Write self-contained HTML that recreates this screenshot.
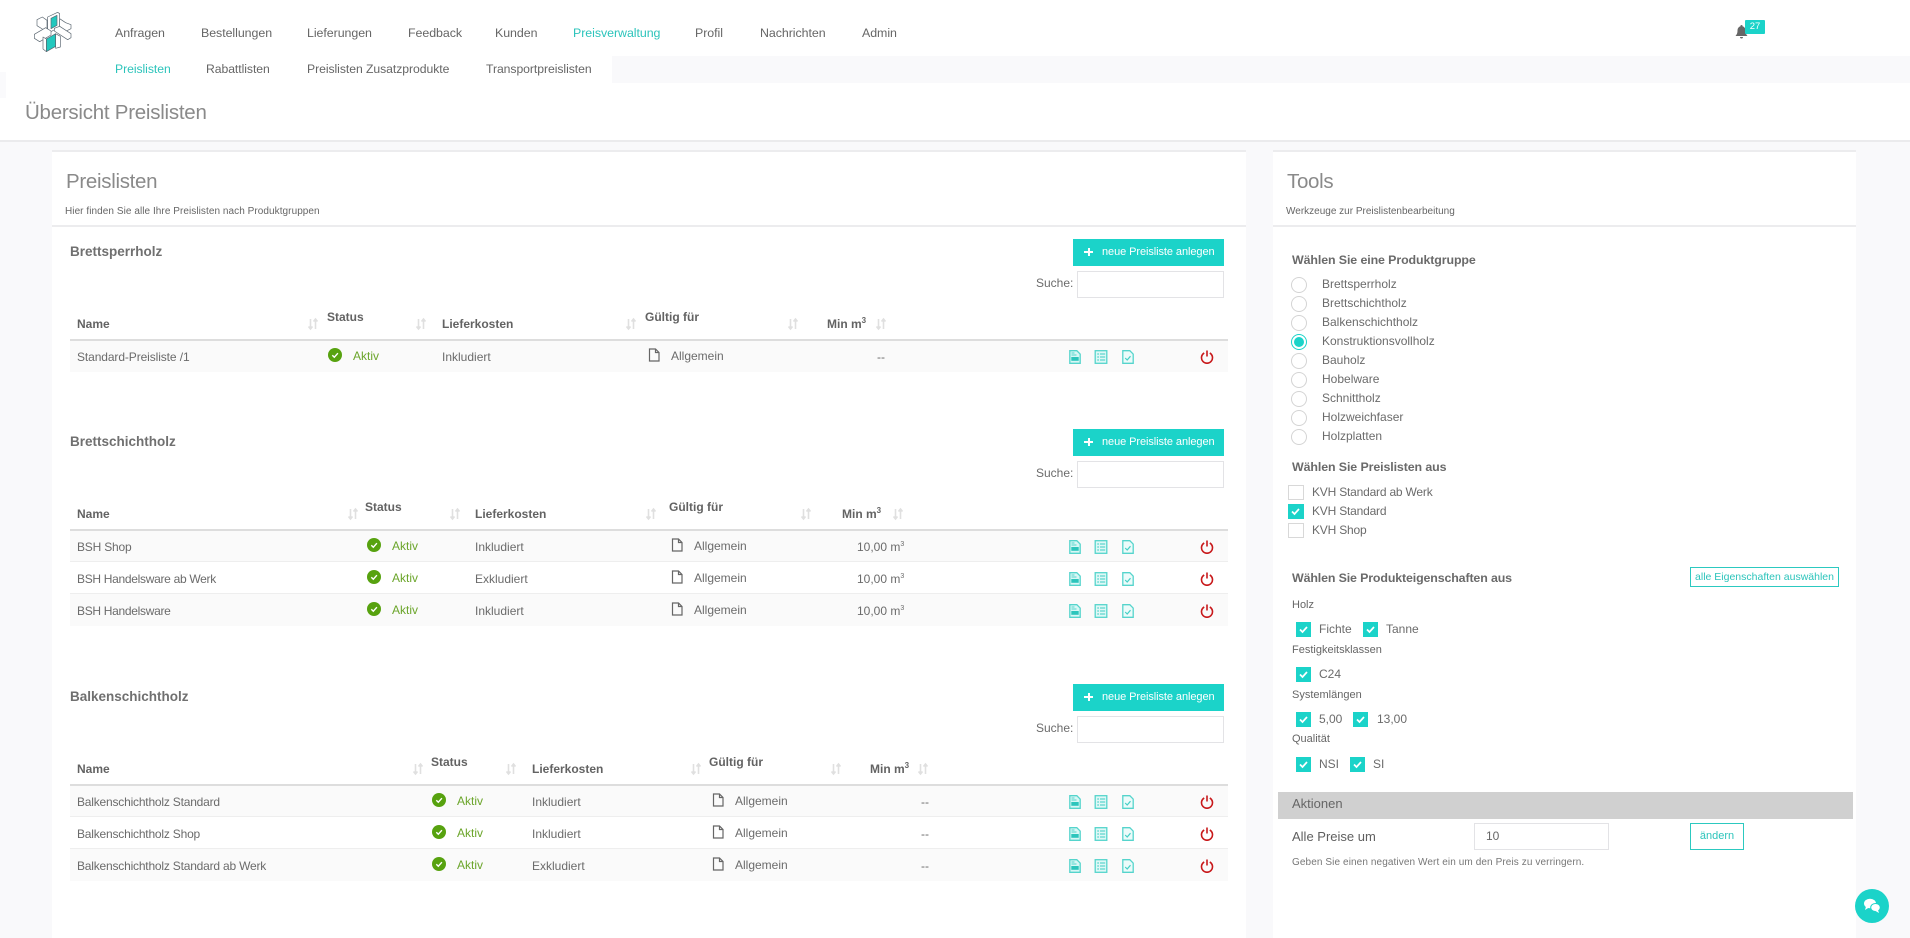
<!DOCTYPE html>
<html lang="de">
<head>
<meta charset="utf-8">
<title>Übersicht Preislisten</title>
<style>
html,body{margin:0;padding:0;width:1910px;height:938px;overflow:hidden;background:#f9f9fb}
body{font-family:"Liberation Sans",sans-serif;color:#666;font-size:12px;position:relative}
.t{position:absolute;white-space:nowrap;line-height:16px}
.b{position:absolute}
.n{font-size:12.4px;color:#666;letter-spacing:-.05px}
.s{font-size:12.2px;letter-spacing:-.05px}
.h{font-weight:bold;color:#636363;font-size:12px}
.sec{font-weight:bold;color:#707070;font-size:13.500px}
.sh{font-weight:bold;color:#6a6a6a;font-size:12.400px;letter-spacing:-.1px}
.w{position:absolute;left:0;height:0;width:1910px}
.btn{position:absolute;left:1073px;top:239px;width:151px;height:27px;background:#1bd3c9;color:#fff;font-size:11px;line-height:27px;white-space:nowrap}
.btn i{position:absolute;background:#fff}
.btn i.x{left:11px;top:12px;width:9px;height:2px}
.btn i.y{left:15px;top:9px;width:2px;height:8px}
.btn span{position:absolute;left:29px;letter-spacing:-.08px}
.in{position:absolute;background:#fff;border:1px solid #e3e3e6;box-sizing:border-box}
.r{position:absolute;left:70px;width:1158px;height:32px;box-sizing:border-box;border-bottom:1px solid #eee}
.gr{background:#fafafa}
.ic{position:absolute;width:14px;height:14px}
.ra{position:absolute;left:1291px;width:16px;height:16px;border:1px solid #d4d4d4;border-radius:50%;box-sizing:border-box;background:#fff}
.cb{position:absolute;width:15px;height:15px;background:#1bd3c9}
.cb svg{position:absolute;left:2px;top:2px}
.ub{position:absolute;left:1288px;width:16px;height:15px;border:1px solid #d8d8d8;box-sizing:border-box;background:#fff}
.l{font-size:12px;color:#6b6b6b}
.k{letter-spacing:-.2px}
.g{color:#6ba52a}
.big{font-size:20.500px;line-height:26px;color:#8a8a8a;letter-spacing:-.3px}
</style>
</head>
<body>
<svg width="0" height="0" style="position:absolute">
<defs>
<symbol id="chk" viewBox="0 0 14 14"><circle cx="7" cy="7" r="7" fill="#57a20f"/><path d="M4.300 7.200l2 2 3.600-4" fill="none" stroke="#fff" stroke-width="1.400"/></symbol>
<symbol id="doc" viewBox="0 0 14 14"><path d="M2.500 1h6l3.500 3.500V13h-9.500z M8.500 1v3.500H12" fill="none" stroke="#666" stroke-width="1.200"/></symbol>
<symbol id="d1" viewBox="0 0 14 14"><path d="M1.800.7h7l3.400 3.400v9.200H1.800z" fill="#d8f7f5" stroke="#55d4cc" stroke-width="1.300"/><path d="M3.300 7h7.400v3.800H3.300z" fill="#2cc5bc"/><path d="M3.500 3h3M3.500 5h5" stroke="#55d4cc"/></symbol>
<symbol id="d2" viewBox="0 0 14 14"><rect x="1.200" y=".7" width="11.600" height="12.600" fill="#dff8f6" stroke="#55d4cc" stroke-width="1.300"/><path d="M3.200 4h1.800M6 4h5.200M3.200 7h1.800M6 7h5.200M3.200 10h1.800M6 10h5.200" stroke="#3ecdc4"/></symbol>
<symbol id="d3" viewBox="0 0 14 14"><path d="M1.800.7h7l3.400 3.400v9.200H1.800z" fill="#ecfbfa" stroke="#55d4cc" stroke-width="1.300"/><path d="M4.200 8l2 2 3.300-3.800" fill="none" stroke="#45cfc6" stroke-width="1.200"/></symbol>
<symbol id="pw" viewBox="0 0 14 14"><path d="M4.200 3a5.500 5.500 0 1 0 5.600 0" fill="none" stroke="#c8191b" stroke-width="1.600"/><path d="M7 .5v6" stroke="#c8191b" stroke-width="1.600"/></symbol>
<symbol id="so" viewBox="0 0 12 14"><path d="M3.500 2v10M1.500 9.500l2 2.500 2-2.500M8.500 12V2M6.500 4.500l2-2.500 2 2.500" fill="none" stroke="#e0e0e0" stroke-width="1.600"/></symbol>
<symbol id="ck" viewBox="0 0 11 11"><path d="M2 5.500l2.500 2.500 4.500-5" fill="none" stroke="#fff" stroke-width="1.700"/></symbol>
</defs>
</svg>

<!-- header -->
<div class="b" style="left:0;top:0;width:1910px;height:140px;background:#fff;border-bottom:2px solid #ebebed"></div>
<div class="b" style="left:612px;top:56px;width:1298px;height:27px;background:#f9f9fb"></div>
<div class="b" style="left:0;top:72px;width:6px;height:26px;background:#fafafc"></div>

<svg class="b" style="left:33px;top:12px" width="40" height="40" viewBox="40 35 120 120">
<g stroke="#5a6670" stroke-width="2" stroke-linejoin="round">
<path d="M52 58l16-8 14 10v34l-14-8-16-10z" fill="#fff"/>
<path d="M84 50l30-14 6 4v40l-30 16-6-4z" fill="#fff"/>
<path d="M94 54l18-9v30l-18 10z" fill="#23c8be"/>
<path d="M120 55l18 12 16 6v12l-20 10-14-10z" fill="#fff"/>
<path d="M44 102l34-20 16 10 0 12-34 20-16-10z" fill="#fff"/>
<path d="M104 84l16-6 34 22v12l-10 6-40-26z" fill="#fff"/>
<path d="M80 116l28-16v38l-28 16z" fill="#23c8be"/>
<path d="M108 100l14 8v32l-14 4z" fill="#fff"/>
<path d="M80 116l-10-6v36l10 8z" fill="#fff"/>
</g>
</svg>

<div class="t n" style="left:115px;top:25px">Anfragen</div>
<div class="t n" style="left:201px;top:25px">Bestellungen</div>
<div class="t n" style="left:307px;top:25px">Lieferungen</div>
<div class="t n" style="left:408px;top:25px">Feedback</div>
<div class="t n" style="left:495px;top:25px">Kunden</div>
<div class="t n" style="left:573px;top:25px;color:#2cc4bb">Preisverwaltung</div>
<div class="t n" style="left:695px;top:25px">Profil</div>
<div class="t n" style="left:760px;top:25px">Nachrichten</div>
<div class="t n" style="left:862px;top:25px">Admin</div>

<div class="t n s" style="left:115px;top:61px;color:#2cc4bb">Preislisten</div>
<div class="t n s" style="left:206px;top:61px">Rabattlisten</div>
<div class="t n s" style="left:307px;top:61px">Preislisten Zusatzprodukte</div>
<div class="t n s" style="left:486px;top:61px">Transportpreislisten</div>

<svg class="b" style="left:1735px;top:25px" width="13" height="14" viewBox="0 0 13 14"><path d="M6.500 0a1 1 0 0 1 1 1.200c2 .6 3 2.200 3 4.300 0 3 .8 4 2 5.500H.5c1.200-1.500 2-2.500 2-5.500 0-2.100 1-3.700 3-4.300A1 1 0 0 1 6.500 0z" fill="#666"/><path d="M5 12h3a1.500 1.500 0 0 1-3 0z" fill="#666"/></svg>
<div class="b" style="left:1745px;top:20px;width:20px;height:14px;background:#1bd3c9;border-radius:1px;color:#fff;font-size:9.500px;line-height:13px;text-align:center">27</div>

<div class="t big" style="left:25px;top:100px;font-size:20.500px;letter-spacing:-.25px">Übersicht Preislisten</div>

<!-- panels -->
<div class="b" style="left:52px;top:150px;width:1194px;height:788px;background:#fff;border-top:2px solid #ececee;box-sizing:border-box"></div>
<div class="b" style="left:52px;top:225px;width:1194px;height:2px;background:#ececee"></div>
<div class="b" style="left:1273px;top:150px;width:583px;height:788px;background:#fff;border-top:2px solid #ececee;box-sizing:border-box"></div>
<div class="b" style="left:1273px;top:225px;width:583px;height:2px;background:#ececee"></div>

<div class="t big" style="left:66px;top:169px">Preislisten</div>
<div class="t" style="left:65px;top:204px;font-size:10px;color:#666;letter-spacing:.06px">Hier finden Sie alle Ihre Preislisten nach Produktgruppen</div>
<div class="t big" style="left:1287px;top:169px">Tools</div>
<div class="t" style="left:1286px;top:204px;font-size:10px;color:#666">Werkzeuge zur Preislistenbearbeitung</div>

<!-- table 1 -->
<div class="w" style="top:0">
<div class="t sec" style="left:70px;top:244px">Brettsperrholz</div>
<div class="btn"><i class="x"></i><i class="y"></i><span>neue Preisliste anlegen</span></div>
<div class="t l" style="left:1036px;top:275px">Suche:</div>
<div class="in" style="left:1077px;top:271px;width:147px;height:27px"></div>
<div class="t h" style="left:77px;top:316px">Name</div>
<svg class="b" style="left:307px;top:317px" width="12" height="14"><use href="#so"/></svg>
<div class="t h" style="left:327px;top:309px">Status</div>
<svg class="b" style="left:415px;top:317px" width="12" height="14"><use href="#so"/></svg>
<div class="t h" style="left:442px;top:316px">Lieferkosten</div>
<svg class="b" style="left:625px;top:317px" width="12" height="14"><use href="#so"/></svg>
<div class="t h" style="left:645px;top:309px">Gültig für</div>
<svg class="b" style="left:787px;top:317px" width="12" height="14"><use href="#so"/></svg>
<div class="t h" style="left:827px;top:316px">Min m<sup style="font-size:8px;line-height:0">3</sup></div>
<svg class="b" style="left:875px;top:317px" width="12" height="14"><use href="#so"/></svg>
<div class="b" style="left:70px;top:339px;width:1158px;height:2px;background:#ddd"></div>

<div class="r gr" style="top:341px;height:31px;border:0"></div>
<div class="t l k" style="left:77px;top:349px;letter-spacing:-.1px">Standard-Preisliste /1</div>
<svg class="ic" style="left:328px;top:348px"><use href="#chk"/></svg>
<div class="t l g" style="left:353px;top:348px">Aktiv</div>
<div class="t l" style="left:442px;top:349px">Inkludiert</div>
<svg class="ic" style="left:647px;top:348px"><use href="#doc"/></svg>
<div class="t l" style="left:671px;top:348px">Allgemein</div>
<div class="t l" style="left:877px;top:349px">--</div>
<svg class="ic" style="left:1068px;top:350px"><use href="#d1"/></svg>
<svg class="ic" style="left:1094px;top:350px"><use href="#d2"/></svg>
<svg class="ic" style="left:1121px;top:350px"><use href="#d3"/></svg>
<svg class="ic" style="left:1200px;top:350px"><use href="#pw"/></svg>
</div>

<!-- table 2 -->
<div class="w" style="top:190px">
<div class="t sec" style="left:70px;top:244px">Brettschichtholz</div>
<div class="btn"><i class="x"></i><i class="y"></i><span>neue Preisliste anlegen</span></div>
<div class="t l" style="left:1036px;top:275px">Suche:</div>
<div class="in" style="left:1077px;top:271px;width:147px;height:27px"></div>
<div class="t h" style="left:77px;top:316px">Name</div>
<svg class="b" style="left:347px;top:317px" width="12" height="14"><use href="#so"/></svg>
<div class="t h" style="left:365px;top:309px">Status</div>
<svg class="b" style="left:449px;top:317px" width="12" height="14"><use href="#so"/></svg>
<div class="t h" style="left:475px;top:316px">Lieferkosten</div>
<svg class="b" style="left:645px;top:317px" width="12" height="14"><use href="#so"/></svg>
<div class="t h" style="left:669px;top:309px">Gültig für</div>
<svg class="b" style="left:800px;top:317px" width="12" height="14"><use href="#so"/></svg>
<div class="t h" style="left:842px;top:316px">Min m<sup style="font-size:8px;line-height:0">3</sup></div>
<svg class="b" style="left:892px;top:317px" width="12" height="14"><use href="#so"/></svg>
<div class="b" style="left:70px;top:339px;width:1158px;height:2px;background:#ddd"></div>

<div class="r gr" style="top:341px;height:31px"></div>
<div class="r" style="top:372px;background:#fff"></div>
<div class="r gr" style="top:404px;border:0"></div>

<div class="t l" style="left:77px;top:349px;letter-spacing:-.2px">BSH Shop</div>
<svg class="ic" style="left:367px;top:348px"><use href="#chk"/></svg>
<div class="t l g" style="left:392px;top:348px">Aktiv</div>
<div class="t l" style="left:475px;top:349px">Inkludiert</div>
<svg class="ic" style="left:670px;top:348px"><use href="#doc"/></svg>
<div class="t l" style="left:694px;top:348px">Allgemein</div>
<div class="t l" style="left:857px;top:349px">10,00 m<sup style="font-size:7px;line-height:0">3</sup></div>
<svg class="ic" style="left:1068px;top:350px"><use href="#d1"/></svg>
<svg class="ic" style="left:1094px;top:350px"><use href="#d2"/></svg>
<svg class="ic" style="left:1121px;top:350px"><use href="#d3"/></svg>
<svg class="ic" style="left:1200px;top:350px"><use href="#pw"/></svg>

<div class="t l" style="left:77px;top:381px;letter-spacing:-.3px">BSH Handelsware ab Werk</div>
<svg class="ic" style="left:367px;top:380px"><use href="#chk"/></svg>
<div class="t l g" style="left:392px;top:380px">Aktiv</div>
<div class="t l" style="left:475px;top:381px">Exkludiert</div>
<svg class="ic" style="left:670px;top:380px"><use href="#doc"/></svg>
<div class="t l" style="left:694px;top:380px">Allgemein</div>
<div class="t l" style="left:857px;top:381px">10,00 m<sup style="font-size:7px;line-height:0">3</sup></div>
<svg class="ic" style="left:1068px;top:382px"><use href="#d1"/></svg>
<svg class="ic" style="left:1094px;top:382px"><use href="#d2"/></svg>
<svg class="ic" style="left:1121px;top:382px"><use href="#d3"/></svg>
<svg class="ic" style="left:1200px;top:382px"><use href="#pw"/></svg>

<div class="t l" style="left:77px;top:413px;letter-spacing:-.3px">BSH Handelsware</div>
<svg class="ic" style="left:367px;top:412px"><use href="#chk"/></svg>
<div class="t l g" style="left:392px;top:412px">Aktiv</div>
<div class="t l" style="left:475px;top:413px">Inkludiert</div>
<svg class="ic" style="left:670px;top:412px"><use href="#doc"/></svg>
<div class="t l" style="left:694px;top:412px">Allgemein</div>
<div class="t l" style="left:857px;top:413px">10,00 m<sup style="font-size:7px;line-height:0">3</sup></div>
<svg class="ic" style="left:1068px;top:414px"><use href="#d1"/></svg>
<svg class="ic" style="left:1094px;top:414px"><use href="#d2"/></svg>
<svg class="ic" style="left:1121px;top:414px"><use href="#d3"/></svg>
<svg class="ic" style="left:1200px;top:414px"><use href="#pw"/></svg>
</div>

<!-- table 3 -->
<div class="w" style="top:445px">
<div class="t sec" style="left:70px;top:244px">Balkenschichtholz</div>
<div class="btn"><i class="x"></i><i class="y"></i><span>neue Preisliste anlegen</span></div>
<div class="t l" style="left:1036px;top:275px">Suche:</div>
<div class="in" style="left:1077px;top:271px;width:147px;height:27px"></div>
<div class="t h" style="left:77px;top:316px">Name</div>
<svg class="b" style="left:412px;top:317px" width="12" height="14"><use href="#so"/></svg>
<div class="t h" style="left:431px;top:309px">Status</div>
<svg class="b" style="left:505px;top:317px" width="12" height="14"><use href="#so"/></svg>
<div class="t h" style="left:532px;top:316px">Lieferkosten</div>
<svg class="b" style="left:690px;top:317px" width="12" height="14"><use href="#so"/></svg>
<div class="t h" style="left:709px;top:309px">Gültig für</div>
<svg class="b" style="left:830px;top:317px" width="12" height="14"><use href="#so"/></svg>
<div class="t h" style="left:870px;top:316px">Min m<sup style="font-size:8px;line-height:0">3</sup></div>
<svg class="b" style="left:917px;top:317px" width="12" height="14"><use href="#so"/></svg>
<div class="b" style="left:70px;top:339px;width:1158px;height:2px;background:#ddd"></div>

<div class="r gr" style="top:341px;height:31px"></div>
<div class="r" style="top:372px;background:#fff"></div>
<div class="r gr" style="top:404px;border:0"></div>

<div class="t l k" style="left:77px;top:349px">Balkenschichtholz Standard</div>
<svg class="ic" style="left:432px;top:348px"><use href="#chk"/></svg>
<div class="t l g" style="left:457px;top:348px">Aktiv</div>
<div class="t l" style="left:532px;top:349px">Inkludiert</div>
<svg class="ic" style="left:711px;top:348px"><use href="#doc"/></svg>
<div class="t l" style="left:735px;top:348px">Allgemein</div>
<div class="t l" style="left:921px;top:349px">--</div>
<svg class="ic" style="left:1068px;top:350px"><use href="#d1"/></svg>
<svg class="ic" style="left:1094px;top:350px"><use href="#d2"/></svg>
<svg class="ic" style="left:1121px;top:350px"><use href="#d3"/></svg>
<svg class="ic" style="left:1200px;top:350px"><use href="#pw"/></svg>

<div class="t l k" style="left:77px;top:381px">Balkenschichtholz Shop</div>
<svg class="ic" style="left:432px;top:380px"><use href="#chk"/></svg>
<div class="t l g" style="left:457px;top:380px">Aktiv</div>
<div class="t l" style="left:532px;top:381px">Inkludiert</div>
<svg class="ic" style="left:711px;top:380px"><use href="#doc"/></svg>
<div class="t l" style="left:735px;top:380px">Allgemein</div>
<div class="t l" style="left:921px;top:381px">--</div>
<svg class="ic" style="left:1068px;top:382px"><use href="#d1"/></svg>
<svg class="ic" style="left:1094px;top:382px"><use href="#d2"/></svg>
<svg class="ic" style="left:1121px;top:382px"><use href="#d3"/></svg>
<svg class="ic" style="left:1200px;top:382px"><use href="#pw"/></svg>

<div class="t l k" style="left:77px;top:413px">Balkenschichtholz Standard ab Werk</div>
<svg class="ic" style="left:432px;top:412px"><use href="#chk"/></svg>
<div class="t l g" style="left:457px;top:412px">Aktiv</div>
<div class="t l" style="left:532px;top:413px">Exkludiert</div>
<svg class="ic" style="left:711px;top:412px"><use href="#doc"/></svg>
<div class="t l" style="left:735px;top:412px">Allgemein</div>
<div class="t l" style="left:921px;top:413px">--</div>
<svg class="ic" style="left:1068px;top:414px"><use href="#d1"/></svg>
<svg class="ic" style="left:1094px;top:414px"><use href="#d2"/></svg>
<svg class="ic" style="left:1121px;top:414px"><use href="#d3"/></svg>
<svg class="ic" style="left:1200px;top:414px"><use href="#pw"/></svg>
</div>

<!-- right panel -->
<div class="t sh" style="left:1292px;top:252px">Wählen Sie eine Produktgruppe</div>
<div class="ra" style="top:277px"></div><div class="t l" style="left:1322px;top:276px">Brettsperrholz</div>
<div class="ra" style="top:296px"></div><div class="t l" style="left:1322px;top:295px">Brettschichtholz</div>
<div class="ra" style="top:315px"></div><div class="t l" style="left:1322px;top:314px">Balkenschichtholz</div>
<div class="ra" style="top:334px;border-color:#1bd3c9"><div style="position:absolute;left:2px;top:2px;width:10px;height:10px;border-radius:50%;background:#1bd3c9"></div></div><div class="t l" style="left:1322px;top:333px">Konstruktionsvollholz</div>
<div class="ra" style="top:353px"></div><div class="t l" style="left:1322px;top:352px">Bauholz</div>
<div class="ra" style="top:372px"></div><div class="t l" style="left:1322px;top:371px">Hobelware</div>
<div class="ra" style="top:391px"></div><div class="t l" style="left:1322px;top:390px">Schnittholz</div>
<div class="ra" style="top:410px"></div><div class="t l" style="left:1322px;top:409px">Holzweichfaser</div>
<div class="ra" style="top:429px"></div><div class="t l" style="left:1322px;top:428px">Holzplatten</div>

<div class="t sh" style="left:1292px;top:459px">Wählen Sie Preislisten aus</div>
<div class="ub" style="top:485px"></div><div class="t l k" style="left:1312px;top:484px">KVH Standard ab Werk</div>
<div class="cb" style="left:1288px;top:504px;width:16px"><svg width="11" height="11"><use href="#ck"/></svg></div><div class="t l k" style="left:1312px;top:503px">KVH Standard</div>
<div class="ub" style="top:523px"></div><div class="t l k" style="left:1312px;top:522px">KVH Shop</div>

<div class="t sh" style="left:1292px;top:570px;letter-spacing:-.13px">Wählen Sie Produkteigenschaften aus</div>
<div class="b" style="left:1690px;top:567px;width:149px;height:20px;border:1px solid #2cc9c0;box-sizing:border-box;color:#2cc4bb;font-size:10.500px;line-height:18px;text-align:center;white-space:nowrap;background:#fff">alle Eigenschaften auswählen</div>

<div class="t" style="left:1292px;top:597px;font-size:11px;color:#666">Holz</div>
<div class="cb" style="left:1296px;top:622px"><svg width="11" height="11"><use href="#ck"/></svg></div><div class="t l" style="left:1319px;top:621px">Fichte</div>
<div class="cb" style="left:1363px;top:622px"><svg width="11" height="11"><use href="#ck"/></svg></div><div class="t l" style="left:1386px;top:621px">Tanne</div>

<div class="t" style="left:1292px;top:642px;font-size:11px;color:#666">Festigkeitsklassen</div>
<div class="cb" style="left:1296px;top:667px"><svg width="11" height="11"><use href="#ck"/></svg></div><div class="t l" style="left:1319px;top:666px">C24</div>

<div class="t" style="left:1292px;top:687px;font-size:11px;color:#666">Systemlängen</div>
<div class="cb" style="left:1296px;top:712px"><svg width="11" height="11"><use href="#ck"/></svg></div><div class="t l" style="left:1319px;top:711px">5,00</div>
<div class="cb" style="left:1353px;top:712px"><svg width="11" height="11"><use href="#ck"/></svg></div><div class="t l" style="left:1377px;top:711px">13,00</div>

<div class="t" style="left:1292px;top:731px;font-size:11px;color:#666">Qualität</div>
<div class="cb" style="left:1296px;top:757px"><svg width="11" height="11"><use href="#ck"/></svg></div><div class="t l" style="left:1319px;top:756px">NSI</div>
<div class="cb" style="left:1350px;top:757px"><svg width="11" height="11"><use href="#ck"/></svg></div><div class="t l" style="left:1373px;top:756px">SI</div>

<div class="b" style="left:1278px;top:792px;width:575px;height:27px;background:#d0d0d0"></div>
<div class="t" style="left:1292px;top:796px;font-size:13px;color:#666">Aktionen</div>

<div class="t" style="left:1292px;top:829px;font-size:13px;color:#5f5f5f">Alle Preise um</div>
<div class="in" style="left:1474px;top:823px;width:135px;height:27px;font-size:12px;line-height:25px;padding-left:11px;color:#666">10</div>
<div class="b" style="left:1690px;top:823px;width:54px;height:27px;border:1px solid #2cc9c0;box-sizing:border-box;color:#2cc4bb;font-size:11px;line-height:24px;text-align:center;background:#fff">ändern</div>
<div class="t" style="left:1292px;top:855px;font-size:10px;color:#777;letter-spacing:.1px">Geben Sie einen negativen Wert ein um den Preis zu verringern.</div>

<!-- chat -->
<div class="b" style="left:1855px;top:889px;width:34px;height:34px;border-radius:50%;background:#1bd3c9"></div>
<svg class="b" style="left:1863px;top:897px" width="18" height="18" viewBox="0 0 18 18"><ellipse cx="7" cy="6.500" rx="6" ry="4.800" fill="#fff"/><path d="M3 9.500L2 13l4-2.500z" fill="#fff"/><ellipse cx="12.500" cy="10.500" rx="4.800" ry="4" fill="#fff" stroke="#1bd3c9"/><path d="M15 13l1 3-3.500-2z" fill="#fff"/></svg>
</body>
</html>
